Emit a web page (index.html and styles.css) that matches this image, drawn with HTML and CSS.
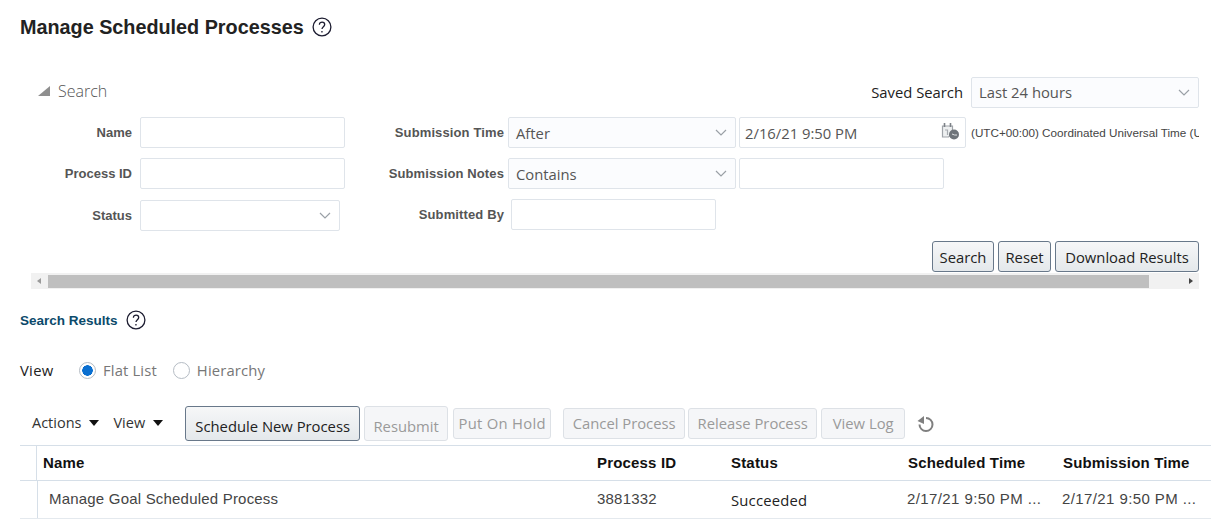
FILE: index.html
```html
<!DOCTYPE html>
<html lang="en">
<head>
<meta charset="utf-8">
<title>Manage Scheduled Processes</title>
<link rel="stylesheet" href="styles.css">
</head>
<body>
<header class="page-head">
  <h1 class="page-title">Manage Scheduled Processes</h1>
  <svg class="help help-title" viewBox="0 0 20 20"><circle cx="10" cy="10" r="8.900"/><path d="M7.400 7.700c0-1.600 1.200-2.600 2.700-2.600s2.600 1 2.600 2.300c0 2.200-2.700 2.300-2.700 4.600"/><path class="dot" d="M9.300 14h1.300v1.400H9.300z"/></svg>
</header>

<section class="search-panel">
  <div class="search-top">
    <div class="disclosure">
      <svg class="disc-icon" viewBox="0 0 12 10"><path d="M12 0v10H0z"/></svg>
      <span class="disc-label">Search</span>
    </div>
    <div class="saved">
      <span class="saved-label">Saved Search</span>
      <div class="select saved-select"><span>Last 24 hours</span><svg class="chev" viewBox="0 0 12 7"><path d="M1 1l5 5 5-5"/></svg></div>
    </div>
  </div>

  <div class="form">
    <div class="form-col col-left">
      <div class="row"><label class="lbl">Name</label><div class="input w205"></div></div>
      <div class="row"><label class="lbl">Process ID</label><div class="input w205"></div></div>
      <div class="row row-status"><label class="lbl">Status</label><div class="select w200"><span></span><svg class="chev" viewBox="0 0 12 7"><path d="M1 1l5 5 5-5"/></svg></div></div>
    </div>
    <div class="form-col col-right">
      <div class="row">
        <label class="lbl">Submission Time</label>
        <div class="select w228"><span>After</span><svg class="chev" viewBox="0 0 12 7"><path d="M1 1l5 5 5-5"/></svg></div>
        <div class="input date"><span>2/16/21 9:50 PM</span>
          <svg class="cal" viewBox="0 0 19 17"><path class="cal-body" d="M1.500 3h10v6l-4 5h-6z"/><path class="cal-pin" d="M3.500 0v4M9.500 0v4"/><path class="cal-mark" d="M4 7h2.500v5"/><circle class="cal-clock" cx="13" cy="11.500" r="5"/><path class="cal-hand" d="M11 11l2.500 1H16"/></svg>
        </div>
        <span class="tz">(UTC+00:00) Coordinated Universal Time (UTC)</span>
      </div>
      <div class="row">
        <label class="lbl">Submission Notes</label>
        <div class="select w228"><span>Contains</span><svg class="chev" viewBox="0 0 12 7"><path d="M1 1l5 5 5-5"/></svg></div>
        <div class="input w205"></div>
      </div>
      <div class="row row-by">
        <label class="lbl">Submitted By</label>
        <div class="input w205"></div>
      </div>
    </div>
  </div>

  <div class="form-actions">
    <button class="btn b-search">Search</button>
    <button class="btn b-reset">Reset</button>
    <button class="btn b-download">Download Results</button>
  </div>

  <div class="hscroll">
    <span class="arrow arrow-l"></span>
    <span class="thumb"></span>
    <span class="arrow arrow-r"></span>
  </div>
</section>

<section class="results">
  <div class="results-head">
    <h2 class="results-title">Search Results</h2>
    <svg class="help help-results" viewBox="0 0 20 20"><circle cx="10" cy="10" r="8.900"/><path d="M7.400 7.700c0-1.600 1.200-2.600 2.700-2.600s2.600 1 2.600 2.300c0 2.200-2.700 2.300-2.700 4.600"/><path class="dot" d="M9.300 14h1.300v1.400H9.300z"/></svg>
  </div>

  <div class="view-row">
    <span class="view-label">View</span>
    <span class="radio radio-on"></span><span class="radio-text">Flat List</span>
    <span class="radio radio-off"></span><span class="radio-text">Hierarchy</span>
  </div>

  <div class="toolbar">
    <span class="menu menu-actions">Actions<i class="caret"></i></span>
    <span class="menu menu-view">View<i class="caret"></i></span>
    <button class="btn btn-tall b-schedule">Schedule New Process</button>
    <button class="btn btn-tall btn-off b-resubmit">Resubmit</button>
    <button class="btn btn-off btn-short b-hold">Put On Hold</button>
    <button class="btn btn-off btn-short b-cancel">Cancel Process</button>
    <button class="btn btn-off btn-short b-release">Release Process</button>
    <button class="btn btn-off btn-short b-log">View Log</button>
    <svg class="refresh" viewBox="0 0 18 18"><path class="ref-arc" d="M9 3a6.500 6.500 0 1 1-6.500 6.500"/><path class="ref-head" d="M.5 6L7 1v8z"/></svg>
  </div>

  <div class="table">
    <div class="t-row t-head">
      <div class="t-gutter"></div>
      <div class="t-cell c-name">Name</div>
      <div class="t-cell c-id">Process ID</div>
      <div class="t-cell c-status">Status</div>
      <div class="t-cell c-sched">Scheduled Time</div>
      <div class="t-cell c-sub">Submission Time</div>
    </div>
    <div class="t-row t-body">
      <div class="t-gutter"></div>
      <div class="t-cell c-name">Manage Goal Scheduled Process</div>
      <div class="t-cell c-id">3881332</div>
      <div class="t-cell c-status status-val">Succeeded</div>
      <div class="t-cell c-sched date-val">2/17/21 9:50 PM ...</div>
      <div class="t-cell c-sub date-val">2/17/21 9:50 PM ...</div>
    </div>
  </div>
</section>
</body>
</html>
```

FILE: styles.css
```css
* { box-sizing: border-box; }
html, body { margin: 0; padding: 0; }
body {
  width: 1223px;
  height: 529px;
  overflow: hidden;
  background: #fff;
  font-family: "Liberation Sans", Arial, sans-serif;
  color: #333;
}

/* Title */
.page-head { display: flex; align-items: flex-start; padding: 16px 0 0 20px; height: 77px; }
.page-title { margin: 0; font-size: 19.800px; line-height: 23px; font-weight: bold; color: #222; }
.help { fill: none; stroke: #1c1c30; stroke-width: 1.300; }
.help .dot { fill: #1c1c30; stroke: none; }
.help-title { width: 20px; height: 20px; margin: 1px 0 0 8px; }

/* Search panel */
.search-panel { margin-left: 31px; width: 1168px; overflow: hidden; }
.search-top { display: flex; justify-content: space-between; height: 31px; }
.disclosure { display: flex; align-items: center; padding-left: 7px; }
.disc-icon { width: 12px; height: 10px; fill: #8f8f8f; margin-right: 8px; margin-top: -3px; }
.disc-label { font: 300 16px "Open Sans", sans-serif; color: #555; position: relative; top: -2px; }
.saved { display: flex; align-items: center; }
.saved-label { font: 14.800px "Open Sans", sans-serif; color: #222; margin-right: 8px; padding-bottom: 2px; }
.saved-select { width: 228px; padding-bottom: 2px; }
.saved-select .chev { margin-top: 2px; }

.select, .input {
  height: 31px;
  border: 1px solid #dfe4ea;
  border-radius: 2px;
  background: #fff;
  font: 14.800px "Open Sans", sans-serif;
  color: #555;
  display: flex;
  align-items: center;
  flex: none;
}
.select { background: #fbfcfe; padding-left: 7px; padding-right: 7px; justify-content: space-between; }
.chev { width: 12px; height: 7px; margin-right: 1px; fill: none; stroke: #9aa0a6; stroke-width: 1.200; }
.w205 { width: 205px; }
.w200 { width: 200px; background: #fff; }
.w228 { width: 228px; }

.form { display: flex; margin-top: 9px; height: 114px; }
.form-col { flex: none; }
.row { display: flex; align-items: center; height: 31px; margin-bottom: 10px; }
.row-status { margin-top: 11px; }
.row-by { margin-top: 10px; }
.lbl { font-size: 13px; font-weight: bold; color: #555; text-align: right; flex: none; white-space: nowrap; }
.col-left { width: 314px; }
.col-left .lbl { width: 101px; margin-right: 8px; }
.col-right { flex: 1; min-width: 0; }
.col-right .lbl { width: 159px; margin-right: 4px; letter-spacing: .12px; }
.col-right .row:first-child,
.col-right .row:nth-child(2) { gap: 3px; }
.col-right .row:first-child .lbl,
.col-right .row:nth-child(2) .lbl { margin-right: 1px; }
.col-right .row-by .lbl { margin-right: 7px; }
.date { width: 227px; padding: 0 5px; justify-content: space-between; }
.cal { width: 19px; height: 17px; fill: none; margin-top: -2px; }
.cal-body { fill: #eef0f1; stroke: #a0a4a9; stroke-width: 1.200; }
.cal-pin { stroke: #7d8288; stroke-width: 1.600; }
.cal-mark { stroke: #a7abb0; stroke-width: 1.200; }
.cal-clock { fill: #6f747a; }
.cal-hand { stroke: #dfe1e3; stroke-width: 1; }
.tz { font-size: 11.700px; color: #444; white-space: nowrap; margin-left: 2px; }

.form-actions { display: flex; justify-content: flex-end; gap: 4px; margin-top: 10px; height: 31px; }
.btn {
  height: 31px;
  padding: 0;
  border: 1px solid #68788a;
  border-radius: 3px;
  background: linear-gradient(#f6f7f8, #e4e8eb);
  font: 14.800px "Open Sans", sans-serif;
  color: #222;
  white-space: nowrap;
  flex: none;
}
.b-search { width: 62px; }
.b-reset { width: 53px; }
.b-download { width: 144px; }
.b-schedule { width: 175px; }
.b-resubmit { width: 84px; }
.b-hold { width: 98px; letter-spacing: .3px; }
.b-cancel { width: 122px; }
.b-release { width: 129px; }
.b-log { width: 84px; }

.hscroll { display: flex; align-items: center; height: 16px; margin-top: 1px; background: #f1f1f1; }
.arrow { flex: none; width: 0; height: 0; border-style: solid; border-width: 3.500px 0 3.500px 4px; border-color: transparent; }
.arrow-l { border-width: 3.500px 4px 3.500px 0; border-right-color: #9a9a9a; margin-left: 6px; margin-right: 7px; }
.thumb { flex: none; width: 1101px; height: 13px; background: #bfbfbf; }
.arrow-r { border-left-color: #444; margin-left: 40px; }

/* Results */
.results { padding: 22px 12px 0 20px; }
.results-head { display: flex; align-items: center; height: 20px; }
.results-title { margin: 0; font-size: 13.500px; line-height: 20px; font-weight: bold; color: #0b4a6b; }
.help-results { width: 20px; height: 20px; margin: -2px 0 0 8px; }

.view-row { display: flex; align-items: center; height: 20px; margin-top: 29px; font: 14.800px "Open Sans", sans-serif; }
.view-label { color: #222; width: 59px; letter-spacing: .3px; }
.radio { width: 17px; height: 17px; border-radius: 50%; border: 1px solid #b5bcc4; background: #fff; flex: none; }
.radio-on { background: radial-gradient(circle, #0a6fd0 0 5px, #fff 5.500px); }
.radio-text { color: #777; font-weight: 500; letter-spacing: .15px; margin: 0 16px 0 7px; }

.toolbar { display: flex; align-items: center; height: 35px; margin-top: 26px; font: 14.500px "Open Sans", sans-serif; }
.menu { color: #333; display: flex; align-items: center; position: relative; top: -1px; }
.menu-actions { margin-left: 12px; }
.menu-view { margin-left: 14px; margin-right: 22px; }
.caret { width: 0; height: 0; border-style: solid; border-width: 6px 5.500px 0; border-color: #111 transparent transparent; margin-left: 8px; }
.toolbar .btn { margin-right: 4px; }
.btn.btn-tall { height: 35px; padding-top: 5px; }
.btn-off { background: #f5f6f8; border-color: #dde1e6; color: #9a9a9a; }
.btn.btn-short { padding-bottom: 2px; }
.toolbar .b-resubmit { margin-right: 5px; }
.toolbar .b-hold { margin-right: 12px; }
.toolbar .b-cancel { margin-right: 3px; }
.refresh { width: 18px; height: 18px; margin-left: 8px; fill: none; }
.ref-arc { stroke: #7f7f7f; stroke-width: 2; }
.ref-head { fill: #7f7f7f; }

.table { margin-top: 4px; width: 1191px; border-top: 1px solid #d6dfe8; }
.t-row { display: flex; align-items: center; }
.t-head { height: 35px; padding-bottom: 2px; border-bottom: 1px solid #d6dfe8; font-size: 15px; letter-spacing: .18px; font-weight: bold; color: #111; }
.t-body { height: 38px; padding-bottom: 2px; border-bottom: 1px solid #e4e9ee; font-size: 15px; letter-spacing: .2px; color: #444; }
.t-gutter { flex: none; width: 17px; align-self: stretch; margin-bottom: -2px; border-right: 1px solid #d6dfe8; }
.t-body .t-gutter { width: 18px; }
.t-cell { flex: none; white-space: nowrap; }
.c-name { width: 560px; padding-left: 6px; }
.t-body .c-name { width: 559px; padding-left: 11px; }
.c-id { width: 134px; }
.c-status { width: 177px; }
.c-sched { width: 155px; }
.c-sub { width: 148px; }
.status-val { font: 14.800px "Open Sans", sans-serif; color: #222; position: relative; top: 1px; }
.date-val { letter-spacing: .4px; position: relative; left: -1px; }
```
